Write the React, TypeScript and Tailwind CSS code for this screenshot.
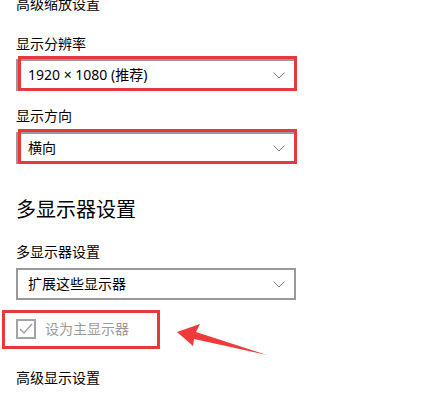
import React from 'react';

const font = { fontFamily: '"Noto Sans", "Noto Sans CJK SC", sans-serif' };

const Chevron = () => (
  <svg width="12" height="7" viewBox="0 0 12 7" className="shrink-0">
    <path d="M0.5 0.5 L6 6 L11.5 0.5" fill="none" stroke="#7a7a7a" strokeWidth="1" />
  </svg>
);

interface SelectProps {
  value: string;
  marked?: boolean;
}

const Select: React.FC<SelectProps> = ({ value, marked }) => (
  <div className="relative w-[280px] h-[32px] border-2 border-[#999999] bg-white flex items-center justify-between pl-[10px] pr-[9px]">
    <span className="text-[14px] text-black leading-none">{value}</span>
    <Chevron />
    {marked && (
      <div className="absolute left-[0px] top-[-5px] w-[279px] h-[35px] border-[3px] border-[#e5393c]" />
    )}
  </div>
);

export default function App() {
  return (
    <div
      className="relative w-[423px] h-[396px] bg-white overflow-hidden px-4 flex flex-col items-start"
      style={font}
    >
      <div className="-mt-[6px] text-[14px] leading-[20px] text-black">高级缩放设置</div>

      <div className="mt-[20px] text-[14px] leading-[20px] text-black">显示分辨率</div>
      <div className="mt-[5px]">
        <Select value="1920 × 1080 (推荐)" marked />
      </div>

      <div className="mt-[15px] text-[14px] leading-[20px] text-black">显示方向</div>
      <div className="mt-[6px]">
        <Select value="横向" marked />
      </div>

      <div className="mt-[32px] text-[20px] leading-[28px] text-black">多显示器设置</div>

      <div className="mt-[18px] text-[14px] leading-[20px] text-black">多显示器设置</div>
      <div className="mt-[6px]">
        <Select value="扩展这些显示器" />
      </div>

      {/* checkbox row with annotation */}
      <div className="relative mt-[19px] flex items-center gap-[9px] h-[20px]">
        <div className="w-[20px] h-[20px] border-2 border-[#a3a3a3] flex items-center justify-center">
          <svg width="14" height="12" viewBox="0 0 14 12">
            <path d="M1 6 L5 10 L13 1" fill="none" stroke="#a3a3a3" strokeWidth="1.5" />
          </svg>
        </div>
        <span className="text-[14px] leading-[20px] text-[#9a9a9a]">设为主显示器</span>
        <div className="absolute left-[-14px] top-[-9px] w-[158px] h-[39px] border-[3px] border-[#e5393c]" />
      </div>

      <div className="mt-[29px] text-[14px] leading-[20px] text-black">高级显示设置</div>

      {/* red arrow */}
      <svg
        className="absolute left-[170px] top-[318px]"
        width="105"
        height="45"
        viewBox="170 318 105 45"
      >
        <polygon
          points="177,332 200,324 196,332 267,355 194,339 193,346"
          fill="#ef3b3b"
        />
      </svg>
    </div>
  );
}
